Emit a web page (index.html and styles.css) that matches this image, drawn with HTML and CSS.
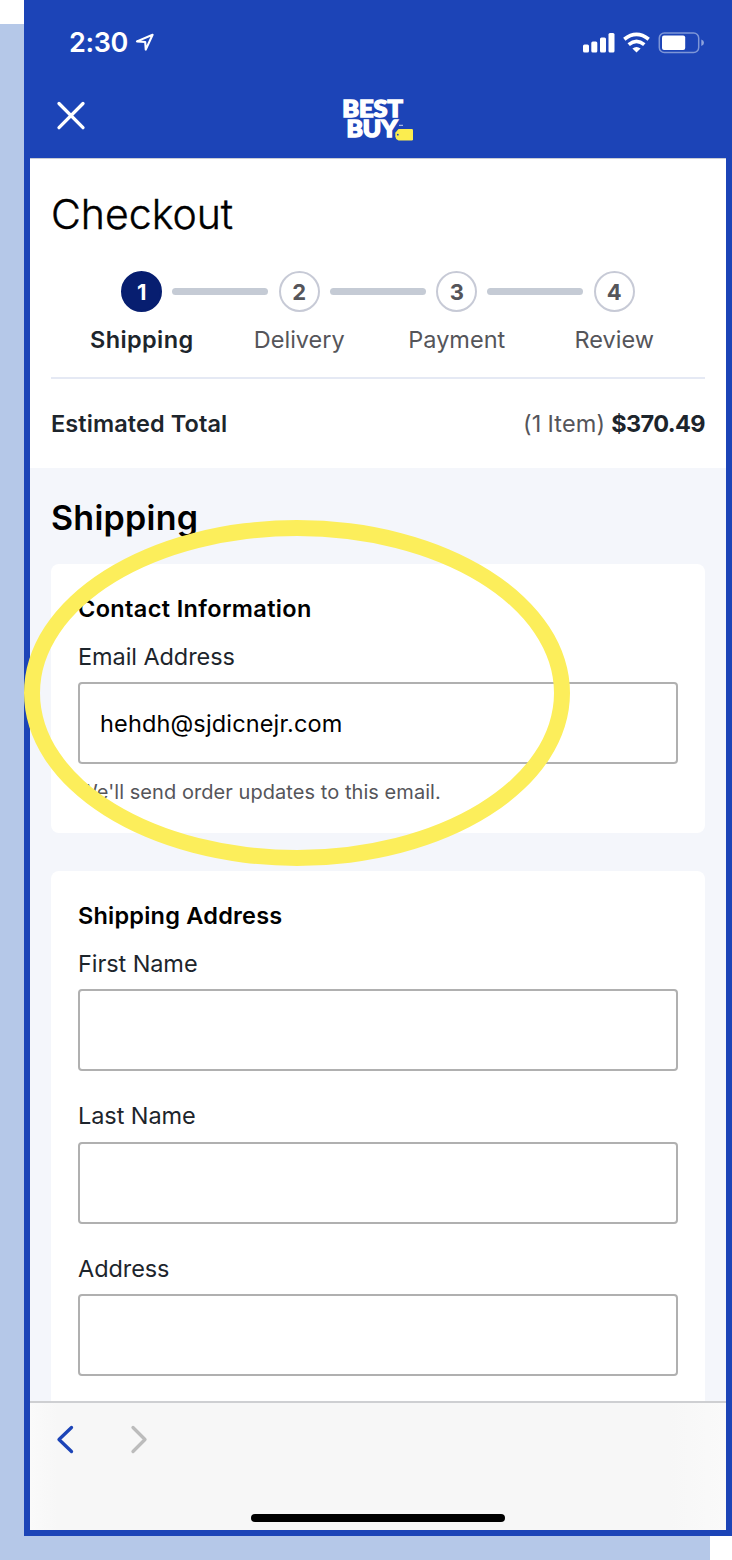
FILE: index.html
```html
<!DOCTYPE html>
<html lang="en">
<head>
<meta charset="utf-8">
<title>Checkout</title>
<link rel="stylesheet" href="styles.css">
</head>
<body>
<div class="backdrop">
<main class="phone">
  <header class="header">
    <div class="status">
      <span class="time">2:30</span>
      <svg class="location" width="20" height="20" viewBox="0 0 20 20"><path d="M1.500 8.800 L18 1.800 L10.800 17.500 L10.200 9.400 Z" fill="none" stroke="#fff" stroke-width="2.200" stroke-linejoin="round"/></svg>
      <svg class="indicators" width="124" height="24" viewBox="0 0 124 24">
        <g fill="#fff">
          <rect x="1" y="14.500" width="6" height="8" rx="1.500"/><rect x="9.300" y="11.500" width="6" height="11" rx="1.500"/><rect x="18" y="7.500" width="6" height="15" rx="1.500"/><rect x="26.500" y="3" width="6" height="19.500" rx="1.500"/>
          <path d="M54.500 22.600 L50.400 18.600 Q54.500 15.200 58.600 18.600 Z"/>
        </g>
        <g fill="none" stroke="#fff" stroke-width="3.700">
          <path d="M42.300 9.200 Q54.500 -.500 66.700 9.200"/><path d="M46.700 14.600 Q54.500 8.200 62.300 14.600"/>
        </g>
        <rect x="77.300" y="3" width="39.400" height="19.500" rx="5" fill="none" stroke="#7e96d7" stroke-width="1.500"/>
        <rect x="80" y="5.500" width="23.200" height="14.500" rx="2" fill="#fff"/>
        <path d="M119.300 9.500 Q122 10.500 122 12.700 Q122 15 119.300 16Z" fill="#8ea3dc"/>
      </svg>
    </div>
    <div class="navbar">
      <svg class="close" width="30" height="30" viewBox="0 0 30 30"><path d="M3 2.500 L27 26.700 M27 2.500 L3 26.700" stroke="#fff" stroke-width="3.300" stroke-linecap="round"/></svg>
      <svg class="logo" width="76" height="62" viewBox="0 -10 76 62">
        <g fill="#fff" stroke="#fff" stroke-width="1.500" font-family="Lato" font-weight="900" font-size="23">
          <text x="2.200" y="19.200" textLength="60.500" lengthAdjust="spacingAndGlyphs">BEST</text>
          <text x="6.500" y="38.600" textLength="51" lengthAdjust="spacingAndGlyphs">BUY</text>
        </g>
        <path d="M59 27.300 h4" stroke="#c5d0ef" stroke-width="1"/>
        <path d="M55.300 34.800 L58.500 31 H71.800 Q73 31 73 32.200 V41.300 Q73 42.500 71.800 42.500 H58.500 Q55.300 41 55.300 38.500 Z" fill="#fbed4f"/><circle cx="57.800" cy="36.700" r=".900" fill="#1c44b7"/>
      </svg>
    </div>
  </header>
  <section class="summary">
    <h1 class="title">Checkout</h1>
    <ol class="steps">
      <li class="step active"><span class="dot">1</span><span class="step-label">Shipping</span></li>
      <li class="step"><span class="dot">2</span><span class="step-label">Delivery</span></li>
      <li class="step"><span class="dot">3</span><span class="step-label">Payment</span></li>
      <li class="step"><span class="dot">4</span><span class="step-label">Review</span></li>
    </ol>
    <div class="total"><strong class="total-label">Estimated Total</strong><span class="amount">(1 Item) <b>$370.49</b></span></div>
  </section>
  <section class="form">
    <h2 class="heading">Shipping</h2>
    <div class="card contact">
      <h3 class="card-title">Contact Information</h3>
      <label class="label" for="email">Email Address</label>
      <input class="input" id="email" value="hehdh@sjdicnejr.com">
      <p class="hint">We'll send order updates to this email.</p>
    </div>
    <div class="card address">
      <h3 class="card-title ship-title">Shipping Address</h3>
      <label class="label" for="first">First Name</label>
      <input class="input" id="first">
      <label class="label" for="last">Last Name</label>
      <input class="input" id="last">
      <label class="label" for="addr">Address</label>
      <input class="input" id="addr">
    </div>
  </section>
  <footer class="toolbar">
    <svg width="110" height="34" viewBox="0 0 110 34" fill="none" stroke-width="3.300" stroke-linecap="round" stroke-linejoin="round"><path d="M21.500 4.500 L9 16.500 L21.500 28.500" stroke="#1c44b7"/><path d="M83 4.500 L95 16.500 L83 28.500" stroke="#bcbcbc"/></svg>
    <div class="home"></div>
  </footer>
</main>
<div class="highlight"></div>
</div>
</body>
</html>
```
FILE: styles.css
```css
* { box-sizing: border-box; }
body { margin: 0; background: #fff; font-family: Inter, "Liberation Sans", sans-serif; }
h1, h2, h3, p, ol { margin: 0; padding: 0; }
.backdrop { position: relative; width: 732px; height: 1560px; padding-left: 24px; overflow: hidden; background: linear-gradient(#b5c8e8, #b5c8e8) 0 24px / 710px 1536px no-repeat; }
.phone { display: flex; flex-direction: column; width: 708px; height: 1536px; border: solid #1c44b7; border-width: 0 6px 6px; background: #fff; overflow: hidden; }
.header { flex: none; height: 159px; background: #1c44b7; border-bottom: 1px solid #c9ccd4; }
.status { display: flex; align-items: center; height: 84px; padding: 0 20px 0 39px; color: #fff; }
.time { font-size: 27px; font-weight: 600; letter-spacing: -.4px; line-height: 30px; padding-top: 2px; }
.location { margin-left: 7px; padding-top: 1px; }
.indicators { margin-left: auto; }
.navbar { display: flex; align-items: flex-start; padding: 17px 0 0 26px; }
.close { flex: none; }
.logo { margin: -13px 0 0 254px; }
.summary { flex: none; height: 309px; padding: 35px 21px 0; }
.title { font-size: 41px; font-weight: 300; line-height: 40px; -webkit-text-stroke: .4px #000; color: #000; }
.steps { display: flex; list-style: none; height: 109px; margin-top: 36px; padding: 1px 12px 0; border-bottom: 2px solid #e5e9f4; }
.step { position: relative; flex: 1; display: flex; flex-direction: column; align-items: center; color: #55555a; font-size: 23.500px; }
.step:not(:last-child)::after { content: ""; position: absolute; left: calc(50% + 30.500px); top: 17px; width: 96px; height: 7px; border-radius: 4px; background: #c5cbd5; }
.dot { display: flex; align-items: center; justify-content: center; width: 41px; height: 41px; border: 2px solid #c7cad6; border-radius: 50%; font-size: 22px; font-weight: 700; }
.step-label { margin-top: 13px; line-height: 30px; }
.active .dot { background: #071e70; border-color: #071e70; color: #fff; }
.active .step-label { color: #1d252c; font-weight: 600; letter-spacing: .4px; }
.total { display: flex; justify-content: space-between; height: 89px; align-items: center; color: #1d252c; font-size: 23.500px; line-height: 29px; }
.total-label { font-weight: 600; letter-spacing: .1px; }
.amount { color: #55555a; letter-spacing: .2px; word-spacing: -1px; }
.amount b { color: #1d252c; font-weight: 700; letter-spacing: -.6px; }
.form { flex: none; height: 933px; overflow: hidden; padding: 30px 21px 0; background: #f4f6fb; }
.heading { font-size: 34px; font-weight: 600; line-height: 40px; letter-spacing: .25px; color: #000; }
.card { padding: 30px 27px 0; background: #fff; border-radius: 8px; }
.contact { height: 269px; margin-top: 26px; }
.address { height: 600px; margin-top: 38px; }
.card-title { font-size: 23.500px; line-height: 30px; font-weight: 600; letter-spacing: .36px; color: #000; }
.ship-title { letter-spacing: .22px; }
.label { display: block; margin-top: 18px; font-size: 23.500px; line-height: 30px; letter-spacing: -.08px; color: #1d252c; }
.input { display: block; width: 600px; height: 82px; margin-top: 10.400px; padding: 0 20px; border: 2px solid #b0b0b0; border-radius: 4px; background: #fff; font: 23.500px Inter, sans-serif; letter-spacing: .15px; color: #000; outline: 0; }
.input + .label { margin-top: 30px; }
.hint { margin-top: 13.600px; font-size: 20px; line-height: 28px; letter-spacing: .06px; color: #55555a; }
.toolbar { flex: none; display: flex; flex-direction: column; justify-content: space-between; align-items: flex-start; height: 129px; padding: 20px 20px 8px; border-top: 2px solid #cecfd2; background: linear-gradient(90deg, #fafafa, #f7f7f7 4%, #f7f7f7 92%, #fafafa); }
.home { align-self: center; width: 254px; height: 8px; border-radius: 5px; background: #000; }
.highlight { position: absolute; left: 24px; top: 520px; width: 546px; height: 346px; border: 16px solid #fcee5b; border-radius: 50%; }
```
